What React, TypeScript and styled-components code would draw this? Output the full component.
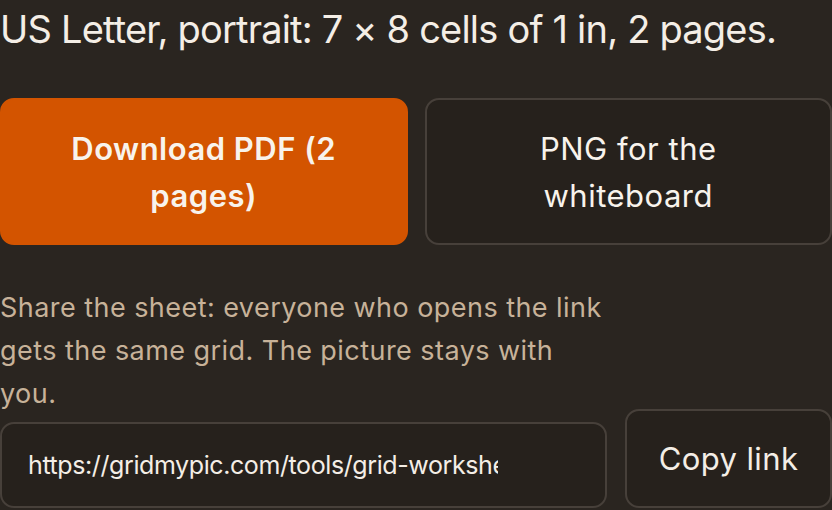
import React from 'react';
import styled, { createGlobalStyle } from 'styled-components';

const GlobalStyle = createGlobalStyle`
  html, body {
    margin: 0;
    padding: 0;
    background: #2a2520;
  }
  body {
    font-family: Inter, "Noto Sans", sans-serif;
    color: #f4eee6;
    overflow: hidden;
  }
`;

const Panel = styled.div`
  width: 832px;
  padding-top: 7px;
  display: flex;
  flex-direction: column;
`;

const Summary = styled.p`
  margin: 0;
  font-size: 38px;
  line-height: 44px;
  letter-spacing: -0.8px;
  font-weight: 400;
  color: #f4eee6;
  white-space: nowrap;
`;

const ActionGrid = styled.div`
  display: grid;
  grid-template-columns: 1fr 1fr;
  column-gap: 17px;
  margin-top: 47px;
`;

const ActionButton = styled.button<{ $primary?: boolean }>`
  height: 147px;
  padding: 0 56px;
  border-radius: 14px;
  font-family: inherit;
  font-size: 31px;
  line-height: 47px;
  letter-spacing: 0.5px;
  font-weight: ${({ $primary }) => ($primary ? 600 : 400)};
  color: #f8f3ec;
  background: ${({ $primary }) => ($primary ? '#d35400' : '#26211c')};
  border: 2px solid ${({ $primary }) => ($primary ? '#d35400' : '#47403a')};
  text-align: center;
`;

const ShareNote = styled.p`
  margin: 41px 0 0;
  font-size: 27px;
  line-height: 43px;
  letter-spacing: 0.45px;
  color: #c7b299;
  width: 612px;
`;

const LinkRow = styled.div`
  display: flex;
  align-items: flex-end;
  gap: 18px;
  margin-top: -6px;
`;

const LinkField = styled.input`
  width: 607px;
  height: 86px;
  box-sizing: border-box;
  padding: 0 107px 0 26px;
  border-radius: 14px;
  border: 2px solid #47403a;
  background: #26211c;
  color: #f4eee6;
  font-family: inherit;
  font-size: 25px;
  letter-spacing: -0.4px;
  outline: none;
`;

const CopyButton = styled.button`
  width: 207px;
  height: 99px;
  box-sizing: border-box;
  border-radius: 14px;
  border: 2px solid #47403a;
  background: #26211c;
  color: #f4eee6;
  font-family: inherit;
  font-size: 31px;
  letter-spacing: 0.4px;
  padding: 0;
`;

export default function App() {
  return (
    <>
      <GlobalStyle />
      <Panel>
        <Summary>US Letter, portrait: 7 × 8 cells of 1 in, 2 pages.</Summary>
        <ActionGrid>
          <ActionButton $primary>Download PDF (2 pages)</ActionButton>
          <ActionButton>PNG for the whiteboard</ActionButton>
        </ActionGrid>
        <ShareNote>
          Share the sheet: everyone who opens the link gets the same grid. The picture stays with you.
        </ShareNote>
        <LinkRow>
          <LinkField readOnly value="https://gridmypic.com/tools/grid-worksheet?paper=letter&orientation=portrait&cells=7x8" />
          <CopyButton>Copy link</CopyButton>
        </LinkRow>
      </Panel>
    </>
  );
}
